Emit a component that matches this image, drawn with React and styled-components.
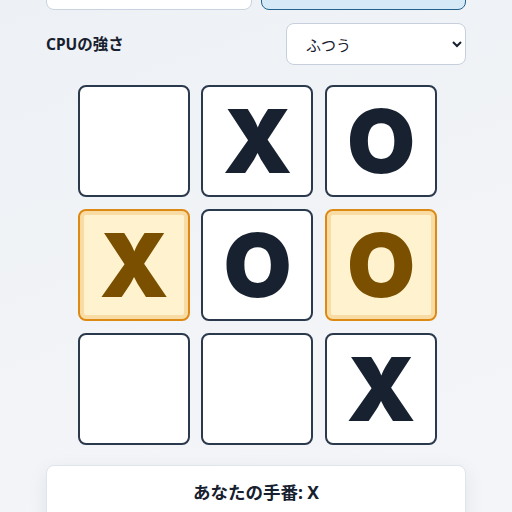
import React from "react"
import styled, { createGlobalStyle } from "styled-components"

const GlobalStyle = createGlobalStyle`
    html, body {
        margin: 0;
        padding: 0;
        background: linear-gradient(160deg, #edf1f5 0%, #f2f4f7 60%, #f4f5f8 100%);
        font-family: "Noto Sans", "Noto Sans CJK JP", sans-serif;
        color: #1b2433;
        overflow: hidden;
    }
`

const StyledPage = styled.div`
    width: 420px;
    margin: 0 auto;
    display: flex;
    flex-direction: column;
`

const StyledModeRow = styled.div`
    display: grid;
    grid-template-columns: 1fr 1fr;
    gap: 9px;
    margin-top: -34px;
`

const StyledModeButton = styled.button`
    height: 44px;
    border-radius: 8px;
    border: 1.5px solid ${(props) => (props.active ? "#23628f" : "#c9d3df")};
    background: ${(props) => (props.active ? "#d5e9f7" : "#ffffff")};
    font-family: "Noto Sans", "Noto Sans CJK JP", sans-serif;
    font-size: 15px;
    line-height: 1;
    padding: 0 0 30px 0;
    color: transparent;
`

const StyledControlRow = styled.div`
    display: flex;
    align-items: center;
    justify-content: space-between;
    margin-top: 13px;
`

const StyledLabel = styled.label`
    font-family: "Noto Sans", "Noto Sans CJK JP", sans-serif;
    font-weight: 700;
    font-size: 15.5px;
    color: #17202e;
    padding-bottom: 2px;
`

const StyledSelect = styled.select`
    width: 180px;
    height: 42px;
    border-radius: 8px;
    border: 1px solid #c6d0dc;
    background: #ffffff;
    padding: 0 4px 0 15px;
    font-family: "Noto Sans CJK JP", sans-serif;
    font-size: 15px;
    color: #17202e;
`

const StyledBoard = styled.div`
    display: grid;
    grid-template-columns: repeat(3, 112px);
    grid-auto-rows: 112px;
    gap: 12px 11.5px;
    justify-content: center;
    margin-top: 20px;
    margin-left: 2px;
`

const StyledCell = styled.button`
    box-sizing: border-box;
    border-radius: 8px;
    border: 2px solid ${(props) => (props.win ? "#dc8a14" : "#2a394c")};
    background: ${(props) => (props.win ? "#fef2cf" : "#ffffff")};
    box-shadow: ${(props) => (props.win ? "inset 0 0 0 4px #f9dca4" : "none")};
    color: ${(props) => (props.win ? "#7a5000" : "#172130")};
    font-family: Inter, sans-serif;
    font-weight: 900;
    font-size: 88px;
    line-height: 1;
    padding: 0 0 0 1px;
    display: flex;
    align-items: center;
    justify-content: center;
`

const StyledStatus = styled.div`
    margin-top: 20px;
    height: 60px;
    background: #ffffff;
    border: 1px solid #dfe5ec;
    border-radius: 8px;
    box-shadow: 0 6px 20px rgba(30, 45, 70, 0.08);
    display: flex;
    justify-content: center;
    padding-top: 13px;
    box-sizing: border-box;
    font-family: "Noto Sans", "Noto Sans CJK JP", sans-serif;
    font-weight: 700;
    font-size: 17.5px;
    color: #17202e;
`

const board = ["", "X", "O", "X", "O", "O", "", "", "X"]
const winLine = [3, 5]

export default function App() {
    return (
        <>
            <GlobalStyle />
            <StyledPage>
                <StyledModeRow>
                    <StyledModeButton>2人で対戦</StyledModeButton>
                    <StyledModeButton active>CPUと対戦</StyledModeButton>
                </StyledModeRow>
                <StyledControlRow>
                    <StyledLabel>CPUの強さ</StyledLabel>
                    <StyledSelect defaultValue="normal">
                        <option value="easy">よわい</option>
                        <option value="normal">ふつう</option>
                        <option value="hard">つよい</option>
                    </StyledSelect>
                </StyledControlRow>
                <StyledBoard>
                    {board.map((mark, i) => (
                        <StyledCell key={i} win={winLine.includes(i)}>
                            {mark}
                        </StyledCell>
                    ))}
                </StyledBoard>
                <StyledStatus>あなたの手番: X</StyledStatus>
            </StyledPage>
        </>
    )
}
